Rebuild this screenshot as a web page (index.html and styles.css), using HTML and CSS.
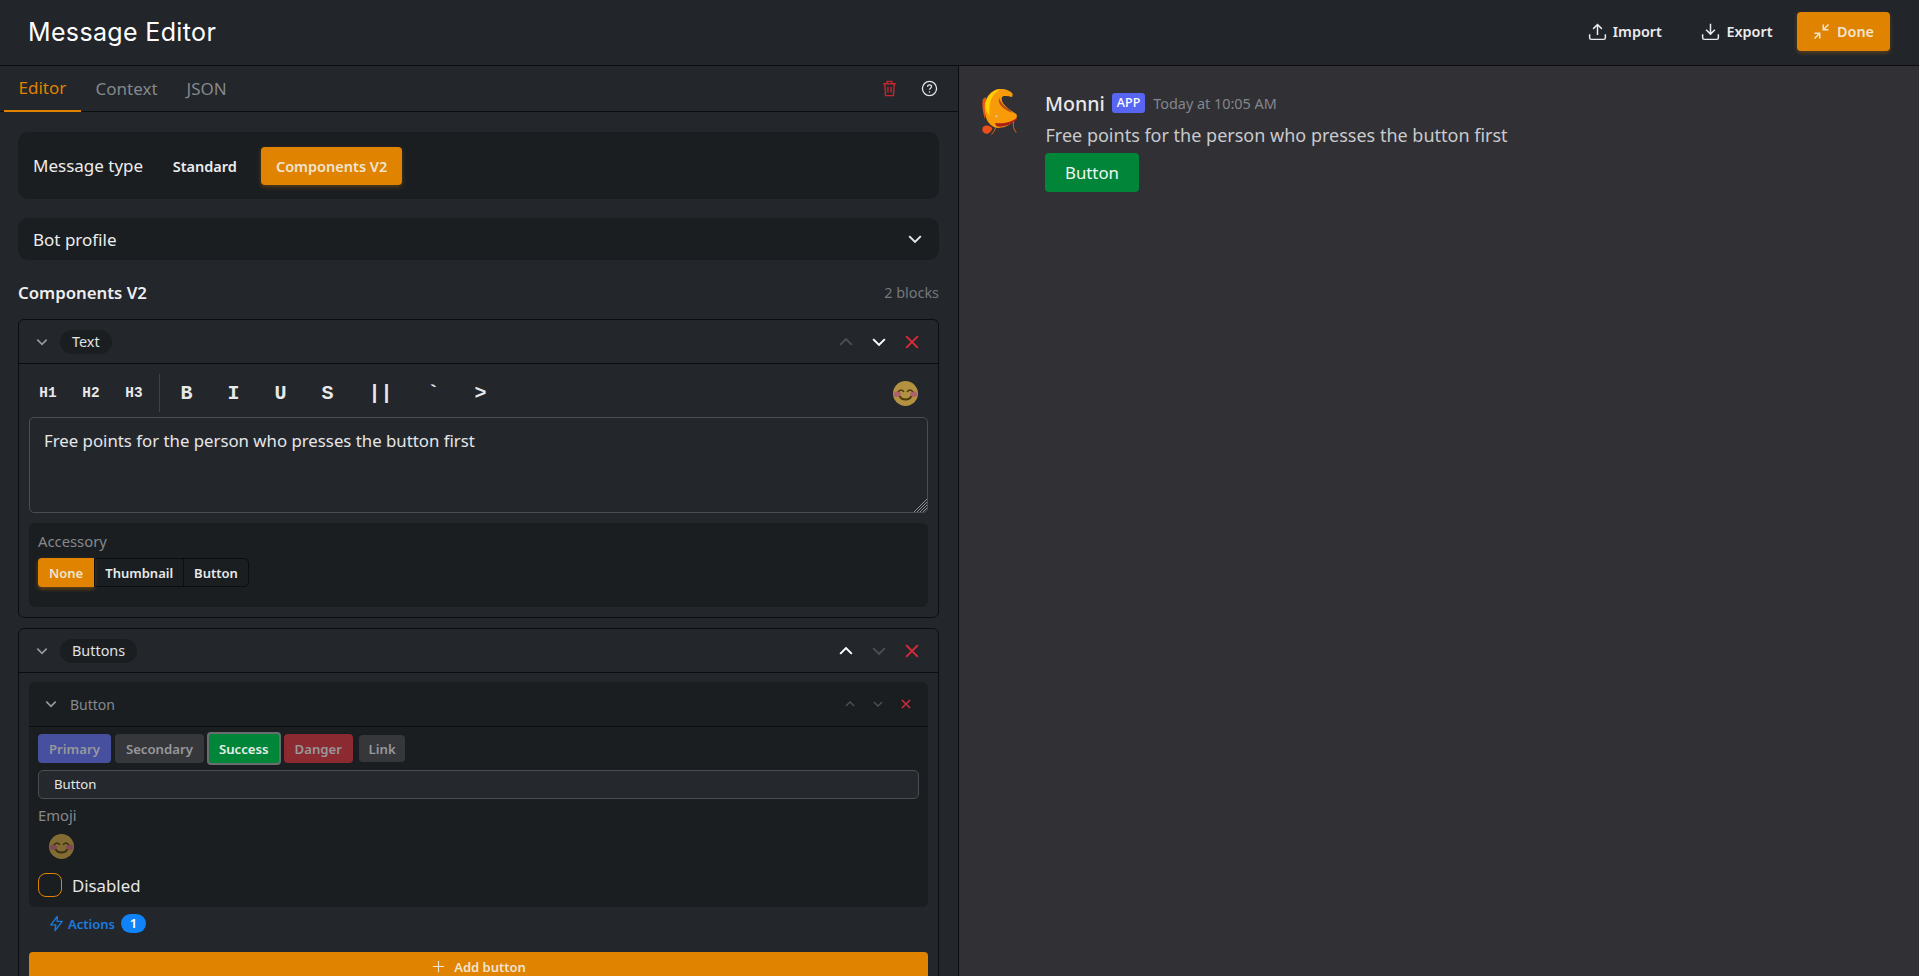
FILE: index.html
```html
<!DOCTYPE html>
<html lang="en">
<head>
    <meta charset="UTF-8">
    <title>Message Editor</title>
    <link rel="stylesheet" href="styles.css">
</head>
<body>
    <svg class="defs">
        <defs>
            <symbol id="smile" viewBox="0 0 24 24">
                <circle cx="12" cy="12" r="12" fill="#ffcc4d"/>
                <ellipse cx="4.2" cy="12.6" rx="3.3" ry="2.8" fill="#f4828c"/>
                <ellipse cx="19.8" cy="12.6" rx="3.3" ry="2.8" fill="#f4828c"/>
                <path d="M5 10.5c1-2.6 4.4-2.6 5.4 0M13.6 10.5c1-2.6 4.4-2.6 5.4 0" fill="none" stroke="#664500" stroke-width="1.5"/>
                <path d="M6.5 14.5c1.5 4.4 9.5 4.4 11 0" fill="none" stroke="#664500" stroke-width="1.9"/>
            </symbol>
            <symbol id="chev-up" viewBox="0 0 24 24">
                <path d="M5 15.5l7-7 7 7" fill="none" stroke="currentColor" stroke-width="2.4"/>
            </symbol>
            <symbol id="chev-down" viewBox="0 0 24 24">
                <path d="M5 8.5l7 7 7-7" fill="none" stroke="currentColor" stroke-width="2.4"/>
            </symbol>
            <symbol id="cross" viewBox="0 0 24 24">
                <path d="M5 5l14 14M19 5L5 19" fill="none" stroke="currentColor" stroke-width="2.4"/>
            </symbol>
        </defs>
    </svg>

    <header class="topbar">
        <h1 class="app-title">Message Editor</h1>
        <div class="top-actions">
            <button class="ghost-btn">
                <svg class="btn-icon" viewBox="0 0 24 24"><path d="M12 16V4M7 9l5-5 5 5M3 15v4a2 2 0 0 0 2 2h14a2 2 0 0 0 2-2v-4" fill="none" stroke="currentColor" stroke-width="1.7"/></svg>
                Import
            </button>
            <button class="ghost-btn">
                <svg class="btn-icon" viewBox="0 0 24 24"><path d="M12 3v12M7 10l5 5 5-5M3 15v4a2 2 0 0 0 2 2h14a2 2 0 0 0 2-2v-4" fill="none" stroke="currentColor" stroke-width="1.7"/></svg>
                Export
            </button>
            <button class="done-btn">
                <svg class="btn-icon" viewBox="0 0 24 24"><path d="M14 4v6h6M14 10l6-6M4 14h6v6M10 14l-6 6" fill="none" stroke="currentColor" stroke-width="1.7"/></svg>
                Done
            </button>
        </div>
    </header>

    <div class="layout">
        <main class="editor">
            <nav class="tabs">
                <a class="tab active">Editor</a>
                <a class="tab">Context</a>
                <a class="tab">JSON</a>
                <div class="tab-tools">
                    <svg class="tool trash" viewBox="0 0 24 24"><path d="M4 6h16M9 6V3h6v3M6 6l1 15h10l1-15M10 10v7M14 10v7" fill="none" stroke="currentColor" stroke-width="1.8"/></svg>
                    <svg class="tool help" viewBox="0 0 24 24"><circle cx="12" cy="12" r="10" fill="none" stroke="currentColor" stroke-width="1.8"/><path d="M9.2 9.5c0-3.6 5.7-3.6 5.7-.2 0 2.2-2.9 2.2-2.9 4.5" fill="none" stroke="currentColor" stroke-width="1.8"/><circle cx="12" cy="17" r="1.1" fill="currentColor"/></svg>
                </div>
            </nav>

            <div class="content">
                <section class="panel type-panel">
                    <span class="panel-label">Message type</span>
                    <button class="type-btn">Standard</button>
                    <button class="type-btn selected">Components V2</button>
                </section>

                <section class="panel profile-panel">
                    <span class="panel-label">Bot profile</span>
                    <svg class="chev profile-chev"><use href="#chev-down"/></svg>
                </section>

                <div class="section-head">
                    <h2>Components V2</h2>
                    <span class="count">2 blocks</span>
                </div>

                <article class="block">
                    <div class="block-head">
                        <svg class="chev fold"><use href="#chev-down"/></svg>
                        <span class="pill">Text</span>
                        <div class="move-tools">
                            <svg class="chev off"><use href="#chev-up"/></svg>
                            <svg class="chev on"><use href="#chev-down"/></svg>
                            <svg class="chev red"><use href="#cross"/></svg>
                        </div>
                    </div>
                    <div class="block-body">
                        <div class="format-bar">
                            <div class="format-group small">
                                <button>H1</button>
                                <button>H2</button>
                                <button>H3</button>
                            </div>
                            <div class="format-group">
                                <button>B</button>
                                <button>I</button>
                                <button>U</button>
                                <button>S</button>
                                <button>||</button>
                                <button>`</button>
                                <button>&gt;</button>
                            </div>
                            <svg class="emoji bar-emoji"><use href="#smile"/></svg>
                        </div>
                        <div class="textarea">
                            Free points for the person who presses the button first
                            <svg class="grip" viewBox="0 0 14 14"><path d="M14 1L1 14M14 4L4 14M14 7L7 14M14 10l-4 4" stroke="#8a8d91" stroke-width="1"/></svg>
                        </div>
                        <div class="sub-box accessory">
                            <div class="field-label">Accessory</div>
                            <div class="segmented">
                                <button class="selected">None</button>
                                <button>Thumbnail</button>
                                <button>Button</button>
                            </div>
                        </div>
                    </div>
                </article>

                <article class="block">
                    <div class="block-head">
                        <svg class="chev fold"><use href="#chev-down"/></svg>
                        <span class="pill">Buttons</span>
                        <div class="move-tools">
                            <svg class="chev on"><use href="#chev-up"/></svg>
                            <svg class="chev off"><use href="#chev-down"/></svg>
                            <svg class="chev red"><use href="#cross"/></svg>
                        </div>
                    </div>
                    <div class="block-body">
                        <div class="sub-box button-box">
                            <div class="sub-head">
                                <svg class="chev fold"><use href="#chev-down"/></svg>
                                <span class="sub-title">Button</span>
                                <div class="move-tools small">
                                    <svg class="chev off"><use href="#chev-up"/></svg>
                                    <svg class="chev off"><use href="#chev-down"/></svg>
                                    <svg class="chev red"><use href="#cross"/></svg>
                                </div>
                            </div>
                            <div class="sub-body">
                                <div class="styles">
                                    <button class="style primary">Primary</button>
                                    <button class="style secondary">Secondary</button>
                                    <button class="style success">Success</button>
                                    <button class="style danger">Danger</button>
                                    <button class="style link">Link</button>
                                </div>
                                <div class="text-input">Button</div>
                                <div class="field-label emoji-label">Emoji</div>
                                <svg class="emoji dim"><use href="#smile"/></svg>
                                <label class="check-row"><span class="checkbox"></span>Disabled</label>
                            </div>
                        </div>
                        <div class="actions-row">
                            <svg class="bolt" viewBox="0 0 24 24"><path d="M13 2L4 14h7l-1 8 10-13h-7z" fill="none" stroke="currentColor" stroke-width="1.9" stroke-linejoin="round"/></svg>
                            <span>Actions</span>
                            <span class="badge">1</span>
                        </div>
                        <button class="add-btn">
                            <svg class="btn-icon" viewBox="0 0 24 24"><path d="M12 3v18M3 12h18" fill="none" stroke="currentColor" stroke-width="1.8"/></svg>
                            Add button
                        </button>
                    </div>
                </article>
            </div>
        </main>

        <aside class="preview">
            <svg class="avatar" viewBox="37 28 108 140">
                <path d="M39 60c2-4 6-7 10-7l-3 66c-6-18-10-40-7-59z" fill="#e8541a"/>
                <path d="M46 70c5-22 22-41 46-43 14 0 30 6 37 15 0 5-1 9-3 10-8-3-18-4-26-2-6 4-5 13 2 23 9 12 24 22 38 30 3 6 2 12-2 17-14 17-38 28-62 24-13-5-24-17-28-33-3-14-4-28-2-41z" fill="#f99a08"/>
                <path d="M47 72c5-21 22-40 44-44-13 9-23 20-28 34-4 14-5 30-3 46-10-10-15-22-13-36z" fill="#ffd000"/>
                <path d="M89 54c2 12 12 24 26 33 6 4 10 8 13 12-15-5-29-14-36-24-5-7-6-15-3-21z" fill="#b4471a"/>
                <path d="M76 130c2 6 4 10 8 11 20 2 44-6 58-21l-1-5c-15 12-41 19-65 15z" fill="#a81f1c"/>
                <path d="M40 142c8-6 20-6 28 4-2 10-12 19-22 16-8-3-10-14-6-20z" fill="#e94e1b"/>
                <path d="M78 142c-2 10-7 17-13 23M132 126c-3 12 0 24 8 33" fill="none" stroke="#d8641a" stroke-width="3"/>
                <circle cx="80" cy="110" r="3" fill="#d9d4c4"/>
            </svg>
            <div class="message">
                <div class="msg-head">
                    <span class="msg-author">Monni</span>
                    <span class="app-tag">APP</span>
                    <span class="msg-time">Today at 10:05 AM</span>
                </div>
                <p class="msg-text">Free points for the person who presses the button first</p>
                <button class="msg-button">Button</button>
            </div>
        </aside>
    </div>
</body>
</html>
```

FILE: styles.css
```css
* {
    box-sizing: border-box;
}
html, body {
    height: 100%;
}
body {
    margin: 0;
    overflow: hidden;
    background: #23262b;
    color: #e4e6e8;
    font-family: "Noto Sans", sans-serif;
    font-size: 16px;
}
button {
    font-family: inherit;
    border: none;
    background: none;
    color: inherit;
    padding: 0;
}
.defs {
    display: none;
}

/* top bar */
.topbar {
    height: 66px;
    display: flex;
    align-items: center;
    justify-content: space-between;
    padding: 0 29px 2px 28px;
    background: #22252a;
    border-bottom: 1px solid #0c0d0f;
}
.app-title {
    margin: 0;
    font-family: Inter, sans-serif;
    font-size: 25px;
    font-weight: 400;
    color: #fff;
    letter-spacing: 0.35px;
}
.top-actions {
    display: flex;
    align-items: center;
    gap: 8.5px;
}
.ghost-btn, .done-btn {
    display: flex;
    align-items: center;
    gap: 5px;
    height: 39px;
    padding: 0 16px 0 14px;
    font-size: 14.4px;
    font-weight: 600;
    color: #ececee;
    border-radius: 4px;
}
.done-btn {
    background: #e08300;
    color: #f0e4d2;
    box-shadow: 0 2px 4px rgba(224, 131, 0, 0.3);
}
.btn-icon {
    width: 21px;
    height: 21px;
}

.layout {
    display: flex;
    height: calc(100vh - 66px);
}
.editor {
    width: 959px;
    flex: none;
    border-right: 1px solid #0c0d0f;
    overflow: hidden;
}
.preview {
    flex: 1;
    display: flex;
    align-items: flex-start;
    background: #303035;
    padding: 23px 0 0 23px;
}

/* tabs */
.tabs {
    display: flex;
    align-items: center;
    height: 46px;
    padding-left: 4px;
    border-bottom: 1px solid #0c0d0f;
}
.tab {
    display: flex;
    align-items: center;
    height: 46px;
    padding: 0 14.5px;
    font-size: 17px;
    color: #85888c;
}
.tab.active {
    width: 77px;
    color: #e08300;
    padding: 0 0 1px 14.5px;
    border-bottom: 2px solid #e08300;
}
.tab-tools {
    margin-left: auto;
    display: flex;
    align-items: center;
    gap: 22px;
    padding-right: 20.5px;
}
.tool {
    display: block;
}
.trash {
    width: 19px;
    height: 19px;
    color: #c6262e;
}
.help {
    width: 17px;
    height: 17px;
    color: #e4e6e8;
}

.content {
    padding: 20px 19px 0 18px;
}
.panel {
    display: flex;
    align-items: center;
    background: #1b1e21;
    border-radius: 10px;
    padding: 0 14px 0 15px;
}
.panel-label {
    font-size: 17px;
    font-weight: 400;
    color: #ededee;
}
.type-panel {
    height: 67px;
}
.type-btn {
    height: 38px;
    padding: 0 15px;
    margin-left: 14.5px;
    font-size: 14.5px;
    font-weight: 600;
    border-radius: 4px;
    color: #ececee;
}
.type-btn + .type-btn {
    margin-left: 9px;
}
.type-btn.selected {
    background: #e08300;
    color: #f0e4d2;
    box-shadow: 0 2px 4px rgba(224, 131, 0, 0.3);
}
.profile-panel {
    height: 42px;
    margin-top: 19px;
    justify-content: space-between;
}
.chev {
    display: block;
    width: 20px;
    height: 20px;
}
.profile-chev {
    color: #e4e6e8;
}
.section-head {
    display: flex;
    align-items: center;
    justify-content: space-between;
    margin: 17px 0 12px;
    height: 30px;
}
.section-head h2 {
    margin: 0;
    font-size: 16.8px;
    font-weight: 600;
    color: #eeeeef;
}
.count {
    font-size: 14.4px;
    color: #75787c;
}

/* blocks */
.block {
    border: 1px solid #0c0d0f;
    border-radius: 6px;
    margin-bottom: 10px;
}
.block-head {
    display: flex;
    align-items: center;
    height: 44px;
    padding: 0 16px 0 15px;
    border-bottom: 1px solid #0c0d0f;
}
.fold {
    width: 16px;
    height: 16px;
    color: #9a9da0;
}
.pill {
    margin-left: 10px;
    padding: 0 12px;
    height: 24px;
    line-height: 24px;
    border-radius: 12px;
    background: #1b1e21;
    font-size: 14.4px;
    color: #e0e2e4;
}
.move-tools {
    margin-left: auto;
    display: flex;
    align-items: center;
    gap: 13px;
}
.off {
    color: #4b4e52;
}
.on {
    color: #fff;
}
.red {
    color: #d62c36;
}
.block-body {
    padding: 10px;
}
.format-bar {
    display: flex;
    align-items: center;
    height: 38px;
    margin-bottom: 5px;
}
.format-group {
    display: flex;
    align-items: center;
    height: 38px;
    margin-left: 2.5px;
}
.format-group button {
    font-family: "Liberation Mono", monospace;
    font-weight: 700;
    color: #e8e9ea;
    font-size: 20px;
    padding: 0 17.5px;
}
.format-group.small {
    margin-left: -2.5px;
    padding-right: 4px;
    border-right: 1px solid #3e4145;
}
.format-group.small button {
    font-size: 14.4px;
    padding: 0 12.85px;
}
.emoji {
    display: block;
    width: 25px;
    height: 25px;
}
.bar-emoji {
    margin-left: auto;
    margin-right: 10px;
    opacity: 0.65;
}
.textarea {
    position: relative;
    height: 96px;
    padding: 11px 14px;
    font-size: 16.8px;
    line-height: 23px;
    color: #e6e7e8;
    border: 1px solid #4a4d51;
    border-radius: 5px;
}
.grip {
    position: absolute;
    right: 0;
    bottom: 0;
    width: 14px;
    height: 14px;
}
.sub-box {
    background: #1b1e21;
    border-radius: 6px;
}
.accessory {
    margin-top: 10px;
    height: 84px;
    padding: 8px 9px;
}
.field-label {
    font-size: 14.8px;
    line-height: 20px;
    color: #85888c;
}
.segmented {
    display: inline-flex;
    margin-top: 7px;
    height: 29px;
    border: 1px solid #0c0d0f;
    border-radius: 5px;
}
.segmented button {
    padding: 0 10px;
    font-size: 13px;
    font-weight: 600;
    color: #e8e9ea;
    border-left: 1px solid #0c0d0f;
}
.segmented button:first-child {
    border-left: none;
}
.segmented .selected {
    background: #e08300;
    color: #f0e4d2;
    border-radius: 4px 0 0 4px;
    margin: -1px 0 -1px -1px;
    padding: 0 11px;
    height: 29px;
    box-shadow: 0 2px 4px rgba(224, 131, 0, 0.4);
}

/* button block */
.button-box {
    margin-top: -1px;
}
.sub-head {
    display: flex;
    align-items: center;
    height: 45px;
    padding: 0 15px 0 14px;
    border-bottom: 1px solid #0c0d0f;
}
.sub-title {
    margin-left: 11px;
    font-size: 14px;
    color: #85888c;
}
.move-tools.small {
    gap: 14px;
}
.move-tools.small .chev {
    width: 14px;
    height: 14px;
}
.sub-body {
    padding: 5px 9px 10px;
}
.styles {
    display: flex;
    align-items: center;
    gap: 4px;
    height: 33px;
}
.style {
    height: 29px;
    padding: 0 11px;
    font-size: 13.2px;
    font-weight: 600;
    border-radius: 4px;
    color: #96989c;
}
.primary {
    background: #46509f;
}
.secondary {
    background: #36373b;
}
.success {
    background: #008539;
    color: #e8efe9;
    height: 33px;
    margin: 0 -1px;
    border: 2px solid #6a6d70;
    padding: 0 10px;
}
.danger {
    background: #8c2a31;
}
.link {
    background: #36373b;
    height: 27px;
    padding: 0 9.5px;
    margin-left: 2px;
}
.text-input {
    height: 29px;
    margin-top: 5px;
    padding: 0 15px;
    line-height: 27px;
    font-size: 13.2px;
    color: #e6e7e8;
    background: #25282c;
    border: 1px solid #4a4d51;
    border-radius: 5px;
}
.emoji-label {
    margin-top: 6px;
}
.dim {
    margin: 9px 0 0 11px;
    opacity: 0.45;
}
.check-row {
    display: flex;
    align-items: center;
    gap: 10px;
    margin-top: 14px;
    font-size: 16.8px;
    color: #e6e7e8;
}
.checkbox {
    width: 24px;
    height: 24px;
    border: 1px solid #e08300;
    border-radius: 8px;
}
.actions-row {
    display: flex;
    align-items: center;
    height: 33px;
    padding-left: 19px;
    font-size: 13px;
    font-weight: 600;
    color: #1a7ce0;
}
.bolt {
    width: 17px;
    height: 17px;
    margin-right: 3px;
}
.badge {
    margin-left: 6px;
    width: 25px;
    height: 19px;
    line-height: 19px;
    text-align: center;
    border-radius: 10px;
    background: #0f83f7;
    color: #fff;
}
.add-btn {
    display: flex;
    align-items: center;
    justify-content: center;
    gap: 8px;
    width: 100%;
    height: 29px;
    margin-top: 12px;
    font-size: 13px;
    font-weight: 600;
    color: #f0e4d2;
    background: #e08300;
    border-radius: 4px;
}
.add-btn .btn-icon {
    width: 15px;
    height: 15px;
}

/* preview */
.avatar {
    width: 36px;
    height: 46.6px;
    flex: none;
}
.message {
    margin: 2px 0 0 27px;
}
.msg-head {
    display: flex;
    align-items: center;
    height: 24px;
}
.msg-author {
    font-size: 19.6px;
    font-weight: 500;
    color: #e8e8ea;
}
.app-tag {
    margin-left: 7px;
    padding: 0 5px;
    height: 20px;
    line-height: 20px;
    font-size: 12.5px;
    font-weight: 500;
    color: #fff;
    background: #5865f2;
    border-radius: 3px;
}
.msg-time {
    margin-left: 8px;
    font-size: 14.4px;
    color: #85868b;
}
.msg-text {
    margin: 7px 0 5px 0.5px;
    font-size: 18px;
    line-height: 26px;
    color: #c9cacd;
}
.msg-button {
    display: block;
    width: 94px;
    height: 39px;
    font-size: 16.8px;
    color: #f3f6f3;
    background: #008539;
    border-radius: 4px;
}
```
